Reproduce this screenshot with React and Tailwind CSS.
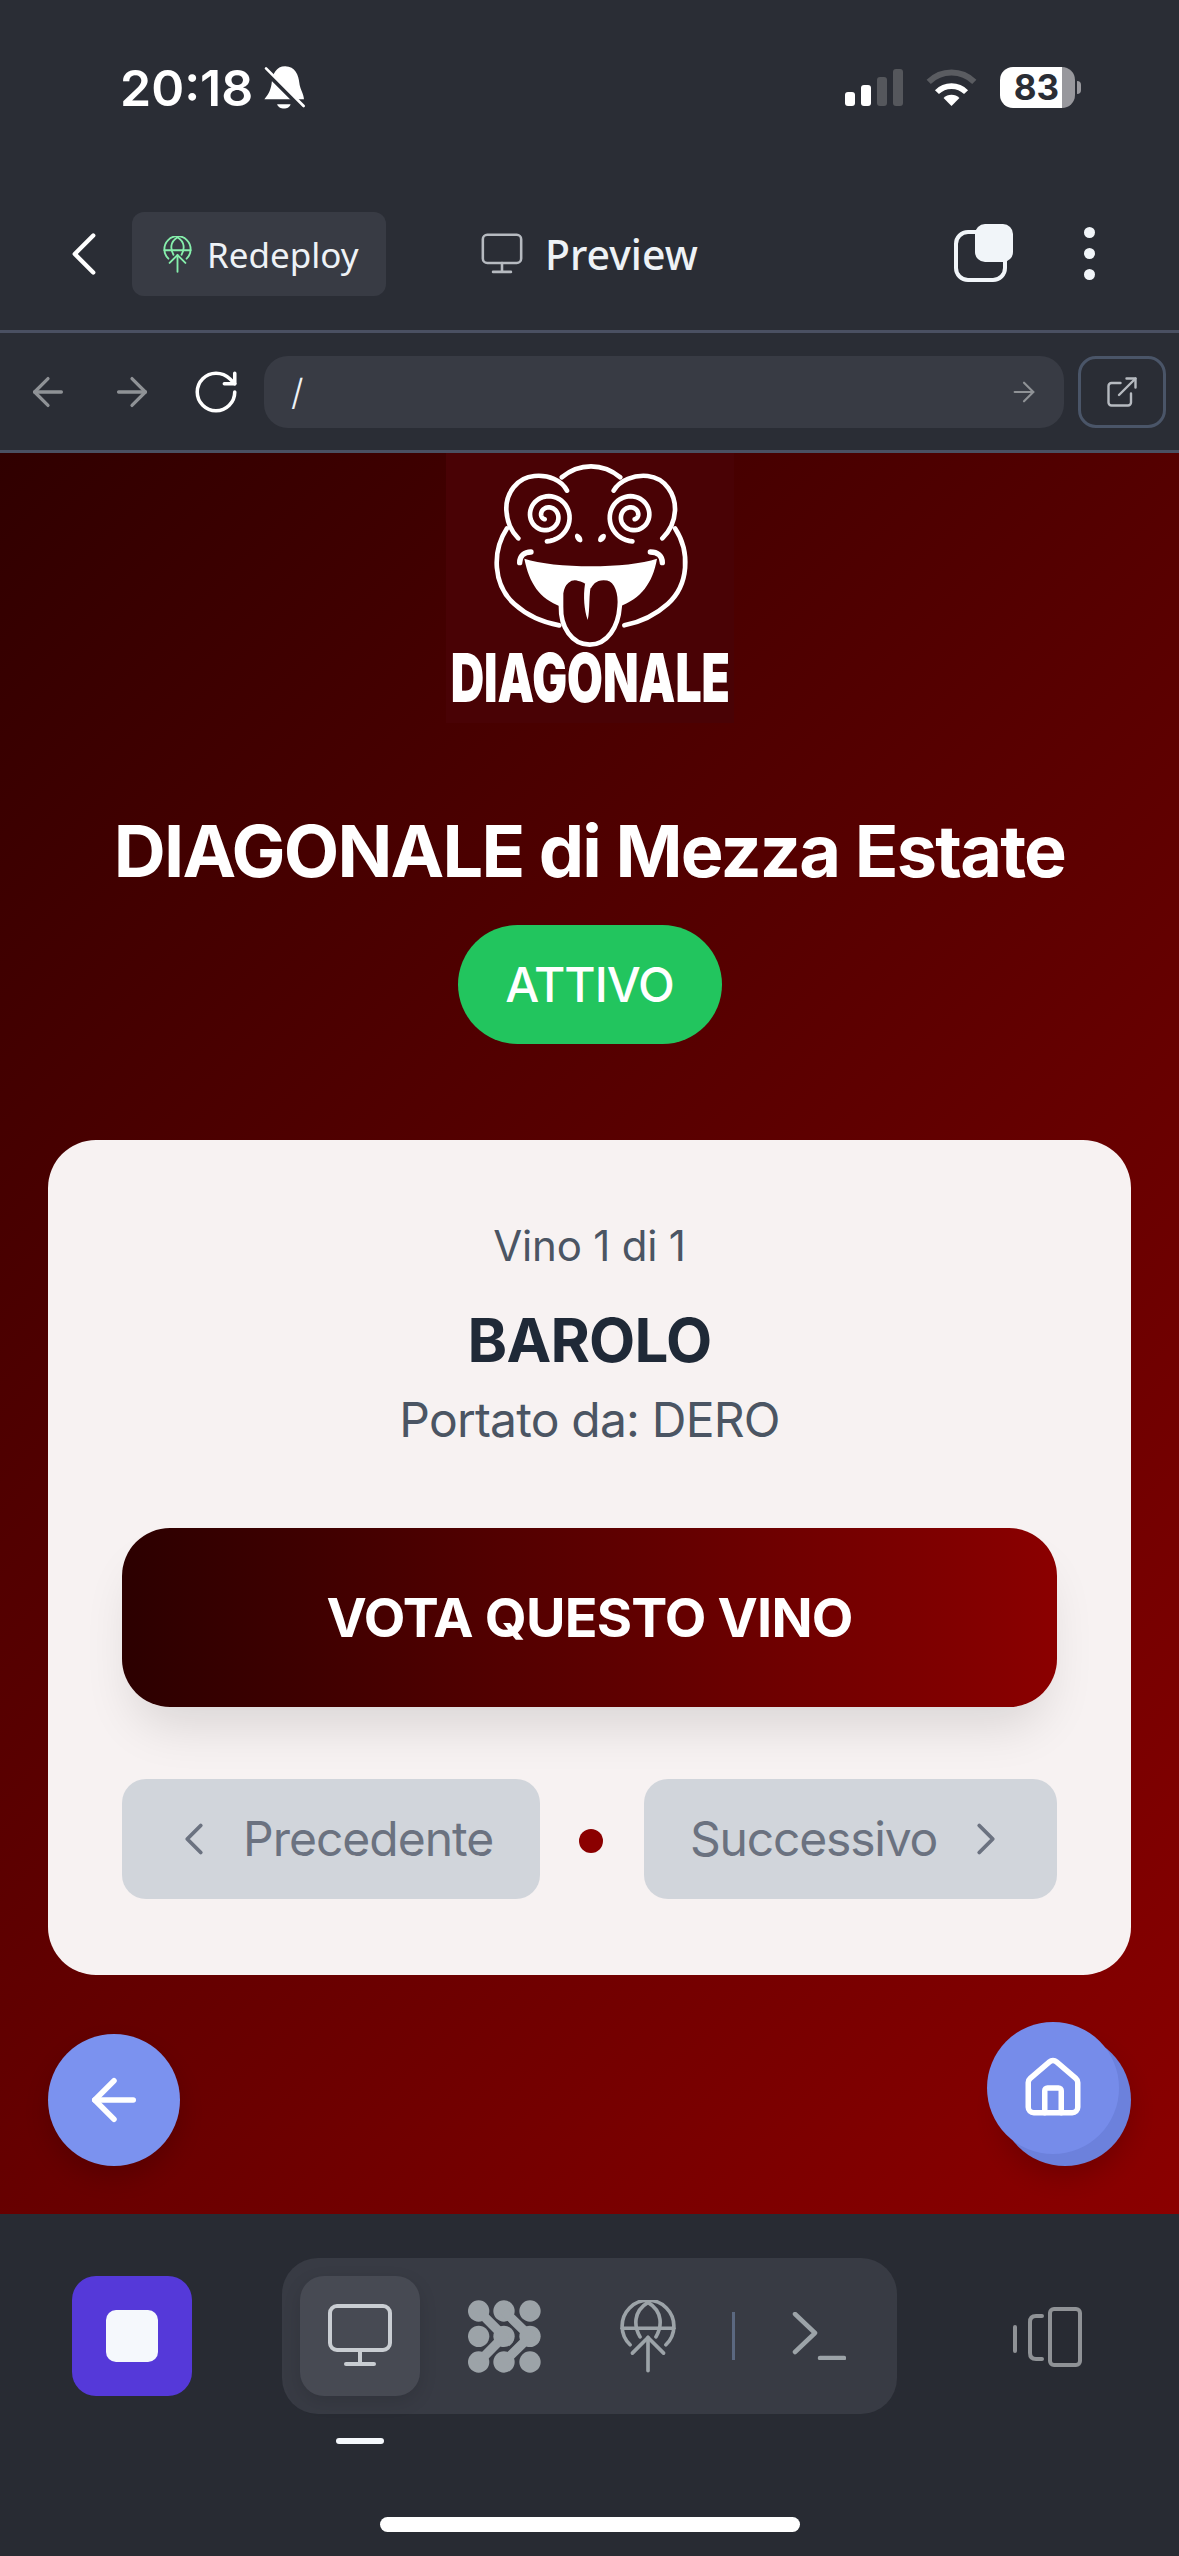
import React from 'react';
import { ArrowLeft, ArrowRight, ChevronLeft, ChevronRight, ExternalLink, House, RotateCw } from 'lucide-react';

// Archimedean spiral for the logo's eyes, from the centre outwards
const spiralPath = (cx, cy, turns, r0, r1, startAngle) => {
  const steps = 90;
  let d = '';
  for (let i = 0; i <= steps; i++) {
    const t = i / steps;
    const a = startAngle + t * turns * Math.PI * 2;
    const r = r0 + (r1 - r0) * t;
    d += `${i === 0 ? 'M' : 'L'}${(cx + Math.cos(a) * r).toFixed(1)} ${(cy + Math.sin(a) * r).toFixed(1)} `;
  }
  return d;
};

const FrogLogo = () => {
  const eye = spiralPath(228, 168, 1.9, 12, 76, 2.2);
  return (
    <svg viewBox="0 0 864 810" className="w-[288px] h-[270px] bg-[#490205] block">
      <g transform="translate(75 21)" fill="none" stroke="#fff" strokeWidth="14" strokeLinecap="round">
        <path d="M288 92C272 60 232 44 190 48C138 52 104 100 106 150C108 184 118 212 142 235" />
        <path d="M272 52C325 8 395 8 448 52" />
        <path d="M428 92C446 60 490 44 530 48C584 54 614 104 612 152C610 186 598 212 574 235" />
        <path d="M108 205C62 275 66 375 130 432C170 468 220 488 265 496" />
        <path d="M612 205C658 275 654 375 590 432C550 468 500 488 460 496" />
        <path d={eye} strokeWidth="14" />
        <path d={eye} strokeWidth="14" transform="matrix(-1 0 0 1 712 0)" />
        <ellipse cx="323" cy="234" rx="9" ry="15" fill="#fff" stroke="none" transform="rotate(-35 323 234)" />
        <ellipse cx="393" cy="234" rx="9" ry="15" fill="#fff" stroke="none" transform="rotate(40 393 234)" />
        <path d="M146 308C146 288 160 276 180 276" strokeWidth="16" />
        <path d="M574 308C574 288 560 276 538 276" strokeWidth="16" />
        <path d="M160 296C250 326 470 326 558 296C545 370 510 415 445 440H270C205 415 175 370 160 296Z" fill="#fff" stroke="none" />
        <path
          d="M270 400C274 366 298 350 320 355C338 358 350 366 358 374C368 358 390 350 410 355C438 362 450 400 446 440C442 500 410 554 356 554C302 554 268 500 270 440Z"
          fill="#490205"
        />
        <path d="M342 372C336 410 340 450 350 480C358 450 352 400 362 368Z" fill="#fff" stroke="none" />
      </g>
      <text
        x="14"
        y="747"
        fontFamily="Inter, sans-serif"
        fontWeight="900"
        fontSize="201"
        fill="#fff"
        textLength="838"
        lengthAdjust="spacingAndGlyphs"
      >
        DIAGONALE
      </text>
    </svg>
  );
};

const BellOff = () => (
  <svg viewBox="610 75 140 140" className="w-[47px] h-[47px]">
    <path d="M682 82C712 82 722 110 724 130C726 150 738 165 738 180H620C635 162 640 148 642 130C645 105 655 82 682 82Z" fill="#fff" />
    <path d="M658 195H698C695 212 662 212 658 195Z" fill="#fff" />
    <path d="M612 84L742 214" stroke="#2a2d35" strokeWidth="16" />
    <path d="M625 88L737 200" stroke="#fff" strokeWidth="8" strokeLinecap="round" />
  </svg>
);

const Signal = () => (
  <div className="flex items-end gap-[6px] h-[37px]">
    <div className="w-[10px] h-[14px] rounded-[3px] bg-white" />
    <div className="w-[10px] h-[21px] rounded-[3px] bg-white" />
    <div className="w-[10px] h-[29px] rounded-[3px] bg-[#55575c]" />
    <div className="w-[10px] h-[37px] rounded-[3px] bg-[#55575c]" />
  </div>
);

const Wifi = () => (
  <svg viewBox="375 82 160 118" className="w-[53px] h-[39px]" fill="none">
    <path d="M386 124A98 98 0 0 1 524 124" stroke="#5a5c61" strokeWidth="18" />
    <path d="M411 155A62 62 0 0 1 499 155" stroke="#fff" strokeWidth="17" />
    <path d="M455 197L431 173A34 34 0 0 1 479 173Z" fill="#fff" />
  </svg>
);

const Battery = () => (
  <div className="flex items-center gap-[2px]">
    <div className="w-[75px] h-[41px] rounded-[13px] overflow-hidden flex">
      <div className="w-[62px] bg-white flex items-center justify-end pr-[3px] text-[#2a2d35] text-[35px] font-bold leading-[41px]">83</div>
      <div className="flex-1 bg-[#98989d]" />
    </div>
    <div className="w-[4px] h-[13px] rounded-r-full bg-[#98989d]" />
  </div>
);

const GlobeUp = ({ className }) => (
  <svg viewBox="88 115 172 220" className={className} fill="none" stroke="currentColor" strokeWidth="11" strokeLinecap="round">
    <path d="M120 250A78 78 0 1 1 228 250" />
    <path d="M174 122C128 150 132 195 150 226" />
    <path d="M174 122C220 150 216 195 198 226" />
    <path d="M96 200H252" />
    <path d="M174 328V228" />
    <path d="M127 275L174 228L221 275" />
  </svg>
);

const Monitor = ({ className }) => (
  <svg viewBox="0 0 72 64" className={className} fill="none" stroke="currentColor" strokeWidth="4" strokeLinecap="round">
    <rect x="6" y="2" width="60" height="44" rx="7" />
    <path d="M36 46V58" />
    <path d="M22 60H50" />
  </svg>
);

const ClusterIcon = () => (
  <svg viewBox="530 115 225 225" className="w-[75px] h-[75px]" fill="#9ca3a8">
    {[565, 641, 719].map((x) => [151, 227, 304].map((y) => (
      <circle key={`${x}-${y}`} cx={x} cy={y} r="32" />
    )))}
    <g fill="none" stroke="#9ca3a8" strokeWidth="28" strokeLinejoin="round">
      <path d="M565 151L641 227L565 304" />
      <path d="M641 151L719 227L641 304" />
    </g>
  </svg>
);

const TerminalIcon = () => (
  <svg viewBox="0 0 54 48" className="w-[54px] h-[48px]" fill="none" stroke="#9ca3a8" strokeWidth="4.5" strokeLinecap="round" strokeLinejoin="round">
    <path d="M3 2L23 21L3 40" />
    <path d="M28 46H52" />
  </svg>
);

const PanelsIcon = () => (
  <svg viewBox="0 0 70 60" className="w-[70px] h-[60px]" fill="none" stroke="#8f9296" strokeWidth="4" strokeLinecap="round">
    <rect x="38" y="2" width="30" height="56" rx="4" />
    <path d="M30 9H24Q18 9 18 15V46Q18 52 24 52H30" />
    <path d="M3 20V44" />
  </svg>
);

export default function App() {
  return (
    <div className="w-[1179px] h-[2556px] flex flex-col bg-[#2a2d35] font-['Inter',sans-serif] overflow-hidden">
      {/* Status bar */}
      <div className="h-[212px] shrink-0 flex items-start justify-between pl-[120px] pr-[98px] pt-[67px]">
        <div className="flex items-center gap-[8px] h-[41px]">
          <span className="text-white text-[50px] font-semibold leading-none">20:18</span>
          <BellOff />
        </div>
        <div className="flex items-center h-[41px]">
          <Signal />
          <div className="ml-[22px] mr-[22px]"><Wifi /></div>
          <Battery />
        </div>
      </div>

      {/* Editor toolbar */}
      <div className="h-[118px] shrink-0 flex items-start">
        <ChevronLeft className="w-[74px] h-[74px] ml-[47px] mt-[5px] text-white" strokeWidth={1.4} />
        <div className="ml-[11px] w-[254px] h-[84px] rounded-[12px] bg-[#383b44] flex items-center pl-[31px] gap-[15px]">
          <GlobeUp className="w-[29px] h-[37px] text-[#86efac]" />
          <span className="text-[#eef2f6] text-[35px] leading-none font-['Noto_Sans',sans-serif]">Redeploy</span>
        </div>
        <div className="ml-[93px] h-[84px] flex items-center gap-[20px]">
          <Monitor className="w-[46px] h-[42px] text-[#b6bac0]" />
          <span className="text-[#eef2f6] text-[41px] leading-none font-medium font-['Noto_Sans',sans-serif]">Preview</span>
        </div>
        <div className="ml-auto relative w-[59px] h-[58px] mt-[12px] mr-[71px]">
          <div className="absolute left-0 bottom-0 w-[53px] h-[52px] rounded-[14px] border-[4px] border-[#f1f5f9]" />
          <div className="absolute right-0 top-0 w-[38px] h-[38px] rounded-[10px] bg-[#f1f5f9]" />
        </div>
        <div className="mr-[84px] mt-[15px] flex flex-col gap-[10px]">
          <div className="w-[11px] h-[11px] rounded-full bg-[#f1f5f9]" />
          <div className="w-[11px] h-[11px] rounded-full bg-[#f1f5f9]" />
          <div className="w-[11px] h-[11px] rounded-full bg-[#f1f5f9]" />
        </div>
      </div>
      <div className="h-[3px] shrink-0 bg-[#4a5062]" />

      {/* Address bar */}
      <div className="h-[117px] shrink-0 flex items-center">
        <ArrowLeft className="w-[46px] h-[46px] ml-[25px] text-[#8f9296]" strokeWidth={1.7} />
        <ArrowRight className="w-[46px] h-[46px] ml-[38px] text-[#8f9296]" strokeWidth={1.7} />
        <RotateCw className="w-[50px] h-[50px] ml-[36px] text-white" strokeWidth={1.7} />
        <div className="ml-[23px] w-[800px] h-[72px] rounded-[24px] bg-[#383b44] flex items-center justify-between pl-[27px] pr-[24px]">
          <span className="text-[#eef2f6] text-[36px] leading-none font-light">/</span>
          <ArrowRight className="w-[32px] h-[32px] text-[#8f9296]" strokeWidth={1.6} />
        </div>
        <div className="ml-[14px] w-[88px] h-[72px] rounded-[18px] border-[3px] border-[#4a5568] flex items-center justify-center">
          <ExternalLink className="w-[36px] h-[36px] text-[#b6bac0]" strokeWidth={1.6} />
        </div>
      </div>
      <div className="h-[3px] shrink-0 bg-[#4a5062]" />

      {/* Preview */}
      <main className="relative h-[1761px] shrink-0 flex flex-col items-center bg-[linear-gradient(135deg,#300000,#8b0000)]">
        <FrogLogo />
        <h1 className="mt-[80px] text-white text-[72px] leading-[96px] font-bold tracking-[-1.76px]">DIAGONALE di Mezza Estate</h1>
        <div className="mt-[26px] w-[264px] h-[119px] rounded-full bg-[#22c55e] flex items-center justify-center text-white text-[48px] font-medium tracking-[-1px]">
          ATTIVO
        </div>

        <div className="mt-[96px] w-[1083px] h-[835px] rounded-[48px] bg-[#f7f2f2] pt-[76px] px-[74px] flex flex-col items-center">
          <div className="text-[#4b5563] text-[42px] leading-[60px] tracking-[-0.2px]">Vino 1 di 1</div>
          <div className="mt-[22px] text-[#1f2937] text-[60px] leading-[84px] font-bold tracking-[-0.8px]">BAROLO</div>
          <div className="mt-[2px] text-[#4b5563] text-[48px] leading-[72px] tracking-[-0.8px]">Portato da: DERO</div>
          <button className="mt-[72px] w-full h-[179px] rounded-[48px] bg-[linear-gradient(90deg,#2c0000,#8b0000)] text-white text-[54px] font-bold tracking-[-0.8px] shadow-[0_30px_50px_-12px_rgba(0,0,0,0.12)]">
            VOTA QUESTO VINO
          </button>
          <div className="mt-[72px] w-full flex items-center justify-between">
            <button className="w-[418px] h-[120px] rounded-[24px] bg-[#d1d5db] text-[#6b7280] text-[48px] tracking-[-1px] flex items-center pl-[45px] gap-[22px]">
              <ChevronLeft className="w-[54px] h-[54px]" strokeWidth={1.7} />
              Precedente
            </button>
            <div className="w-[24px] h-[24px] rounded-full bg-[#8b0000] -ml-[2px] mt-[4px]" />
            <button className="w-[413px] h-[120px] rounded-[24px] bg-[#d1d5db] text-[#6b7280] text-[48px] tracking-[-1.2px] flex items-center pl-[46px] gap-[22px]">
              Successivo
              <ChevronRight className="w-[54px] h-[54px]" strokeWidth={1.7} />
            </button>
          </div>
        </div>

        {/* Floating buttons */}
        <button className="absolute left-[48px] top-[1581px] w-[132px] h-[132px] rounded-full bg-[#7b92ef] flex items-center justify-center text-white shadow-[0_12px_24px_rgba(0,0,0,0.15)]">
          <ArrowLeft className="w-[66px] h-[66px]" strokeWidth={2} />
        </button>
        <div className="absolute left-[999px] top-[1581px] w-[132px] h-[132px] rounded-full bg-[#6c81dc] shadow-[0_12px_24px_rgba(0,0,0,0.15)]" />
        <button className="absolute left-[987px] top-[1569px] w-[132px] h-[132px] rounded-full bg-[#768cea] flex items-center justify-center text-white">
          <House className="w-[66px] h-[66px]" strokeWidth={2} />
        </button>
      </main>

      {/* Bottom dock */}
      <div className="flex-1 relative bg-[#282b33]">
        <div className="flex items-start pt-[44px]">
          <div className="ml-[72px] mt-[18px] w-[120px] h-[120px] rounded-[24px] bg-[#5539d9] flex items-center justify-center">
            <div className="w-[52px] h-[52px] rounded-[10px] bg-[#f5f8fc]" />
          </div>
          <div className="ml-[90px] w-[615px] h-[156px] rounded-[36px] bg-[#383b44] flex items-center pl-[18px]">
            <div className="w-[120px] h-[120px] rounded-[24px] bg-[#474a53] flex items-center justify-center shadow-[0_6px_18px_rgba(0,0,0,0.12)]">
              <Monitor className="w-[72px] h-[64px] text-[#c9cdd2]" />
            </div>
            <div className="ml-[47px]"><ClusterIcon /></div>
            <div className="ml-[77px]"><GlobeUp className="w-[58px] h-[73px] text-[#9ca3a8]" /></div>
            <div className="ml-[55px] w-[3px] h-[48px] bg-[#5b6880]" />
            <div className="ml-[57px]"><TerminalIcon /></div>
          </div>
          <div className="ml-[115px] mt-[49px]"><PanelsIcon /></div>
        </div>
        <div className="ml-[336px] mt-[24px] w-[48px] h-[6px] rounded-full bg-[#f5f8fc]" />
        <div className="absolute left-[380px] top-[303px] w-[420px] h-[15px] rounded-full bg-white" />
      </div>
    </div>
  );
}
